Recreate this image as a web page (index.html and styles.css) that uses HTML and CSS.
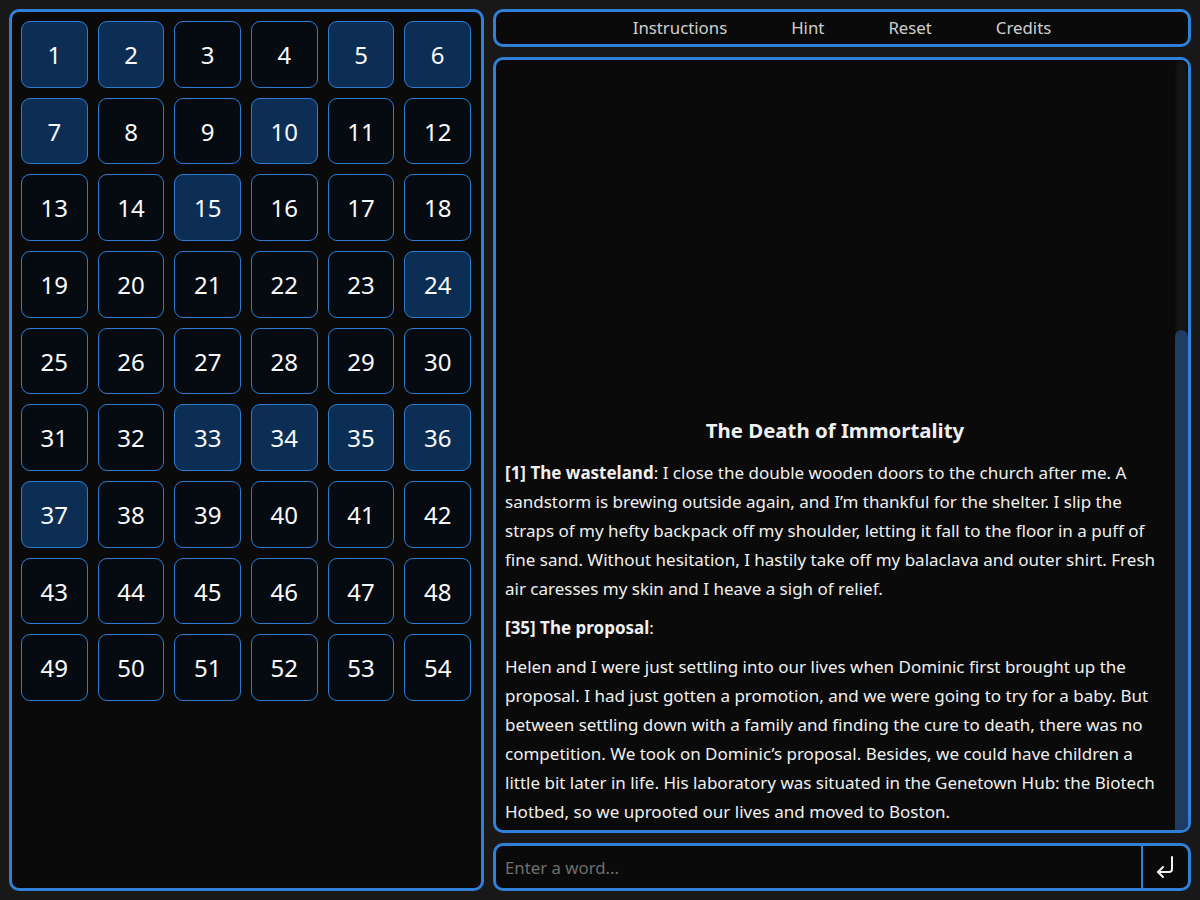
FILE: index.html
```html
<!DOCTYPE html>
<html lang="en">
<head>
<meta charset="utf-8">
<title>The Death of Immortality</title>
<link rel="stylesheet" href="styles.css">
</head>
<body>
<div class="app">
  <section class="board">
    <div class="grid">
      <button class="tile on">1</button><button class="tile on">2</button><button class="tile">3</button><button class="tile">4</button><button class="tile on">5</button><button class="tile on">6</button>
      <button class="tile on">7</button><button class="tile">8</button><button class="tile">9</button><button class="tile on">10</button><button class="tile">11</button><button class="tile">12</button>
      <button class="tile">13</button><button class="tile">14</button><button class="tile on">15</button><button class="tile">16</button><button class="tile">17</button><button class="tile">18</button>
      <button class="tile">19</button><button class="tile">20</button><button class="tile">21</button><button class="tile">22</button><button class="tile">23</button><button class="tile on">24</button>
      <button class="tile">25</button><button class="tile">26</button><button class="tile">27</button><button class="tile">28</button><button class="tile">29</button><button class="tile">30</button>
      <button class="tile">31</button><button class="tile">32</button><button class="tile on">33</button><button class="tile on">34</button><button class="tile on">35</button><button class="tile on">36</button>
      <button class="tile on">37</button><button class="tile">38</button><button class="tile">39</button><button class="tile">40</button><button class="tile">41</button><button class="tile">42</button>
      <button class="tile">43</button><button class="tile">44</button><button class="tile">45</button><button class="tile">46</button><button class="tile">47</button><button class="tile">48</button>
      <button class="tile">49</button><button class="tile">50</button><button class="tile">51</button><button class="tile">52</button><button class="tile">53</button><button class="tile">54</button>
    </div>
  </section>
  <div class="side">
    <nav class="menu">
      <a class="menu-link">Instructions</a>
      <a class="menu-link">Hint</a>
      <a class="menu-link">Reset</a>
      <a class="menu-link">Credits</a>
    </nav>
    <section class="story">
      <div class="story-scroll">
        <div class="story-inner">
          <div class="spacer"></div>
          <h2 class="title">The Death of Immortality</h2>
          <p><b>[1] The wasteland</b>: I close the double wooden doors to the church after me. A sandstorm is brewing outside again, and I’m thankful for the shelter. I slip the straps of my hefty backpack off my shoulder, letting it fall to the floor in a puff of fine sand. Without hesitation, I hastily take off my balaclava and outer shirt. Fresh air caresses my skin and I heave a sigh of relief.</p>
          <p><b>[35] The proposal</b>:</p>
          <p>Helen and I were just settling into our lives when Dominic first brought up the proposal. I had just gotten a promotion, and we were going to try for a baby. But between settling down with a family and finding the cure to death, there was no competition. We took on Dominic’s proposal. Besides, we could have children a little bit later in life. His laboratory was situated in the Genetown Hub: the Biotech Hotbed, so we uprooted our lives and moved to Boston.</p>
        </div>
      </div>
      <div class="scrollbar"><div class="thumb"></div></div>
    </section>
    <form class="entry">
      <input class="word" type="text" placeholder="Enter a word...">
      <button class="send" type="button" aria-label="Enter">
        <svg width="24" height="26" viewBox="0 0 24 26" fill="none" stroke="#f2f2f2" stroke-width="2" stroke-linecap="round" stroke-linejoin="round">
          <path d="M18 3 V15 Q18 18 15 18 H4"/>
          <path d="M9 13 L4 18 L9 23"/>
        </svg>
      </button>
    </form>
  </div>
</div>
</body>
</html>
```

FILE: styles.css
```css
* { box-sizing: border-box; }
html, body { margin: 0; height: 100%; }
body {
  background: #181818;
  color: #f0f0f0;
  font-family: "Noto Sans", "Open Sans", sans-serif;
  padding: 9px;
}
.app {
  display: grid;
  grid-template-columns: 475px 1fr;
  gap: 9px;
  height: 882px;
}
.board {
  border: 3px solid #2f80d8;
  border-radius: 10px;
  background: #0a0a0a;
  padding: 9px 10px 9px 9px;
}
.grid {
  display: grid;
  grid-template-columns: repeat(6, 1fr);
  gap: 10px;
}
.tile {
  aspect-ratio: 1 / 1;
  border: 1px solid #2f7bd0;
  border-radius: 9px;
  background: #060b12;
  color: #fafafa;
  font-family: "Noto Sans", sans-serif;
  font-size: 24px;
  padding: 0;
  display: flex;
  align-items: center;
  justify-content: center;
}
.tile.on { background: #0c2e54; }
.side {
  display: flex;
  flex-direction: column;
  gap: 10px;
  min-height: 0;
}
.menu {
  height: 38px;
  flex: none;
  border: 3px solid #2f80d8;
  border-radius: 10px;
  background: #0a0a0a;
  display: flex;
  justify-content: center;
  align-items: center;
  gap: 64px;
  padding-bottom: 2px;
}
.menu-link {
  color: #cfcfcf;
  font-size: 16.8px;
  cursor: pointer;
}
.story {
  flex: 1;
  min-height: 0;
  border: 3px solid #2f80d8;
  border-radius: 10px;
  background: #0a0a0a;
  display: flex;
  overflow: hidden;
}
.story-scroll {
  flex: 1;
  min-width: 0;
  overflow: hidden;
  display: flex;
  flex-direction: column-reverse;
}
.scrollbar {
  width: 13px;
  flex: none;
  background: #151515;
  box-shadow: inset 0 0 3px #000;
  border-radius: 6px 6px 0 0;
  display: flex;
  flex-direction: column;
  justify-content: flex-end;
}
.thumb {
  height: 65%;
  background: #1f3d63;
  border-radius: 7px 7px 0 0;
}
.story-inner {
  padding: 0 10px 4px 9px;
}
.spacer { height: 745px; }
.title {
  text-align: center;
  font-size: 20.4px;
  font-weight: 700;
  margin: 0 0 12px;
  line-height: 32px;
}
.story p {
  margin: 0 0 10px;
  font-size: 17px;
  line-height: 29px;
  color: #f0f0f0;
}
.story p:last-child { margin-bottom: 0; }
.entry {
  height: 48px;
  flex: none;
  margin: 0;
  border: 3px solid #2f80d8;
  border-radius: 10px;
  background: #0a0a0a;
  display: flex;
  overflow: hidden;
}
.word {
  flex: 1;
  border: 0;
  background: transparent;
  color: #f0f0f0;
  font-family: "Noto Sans", sans-serif;
  font-size: 16.8px;
  padding: 0 9px;
  outline: none;
}
.word::placeholder { color: #6e6e6e; }
.send {
  width: 47px;
  border: 0;
  border-left: 2px solid #2f80d8;
  background: transparent;
  display: flex;
  align-items: center;
  justify-content: center;
  padding: 0;
}
```
